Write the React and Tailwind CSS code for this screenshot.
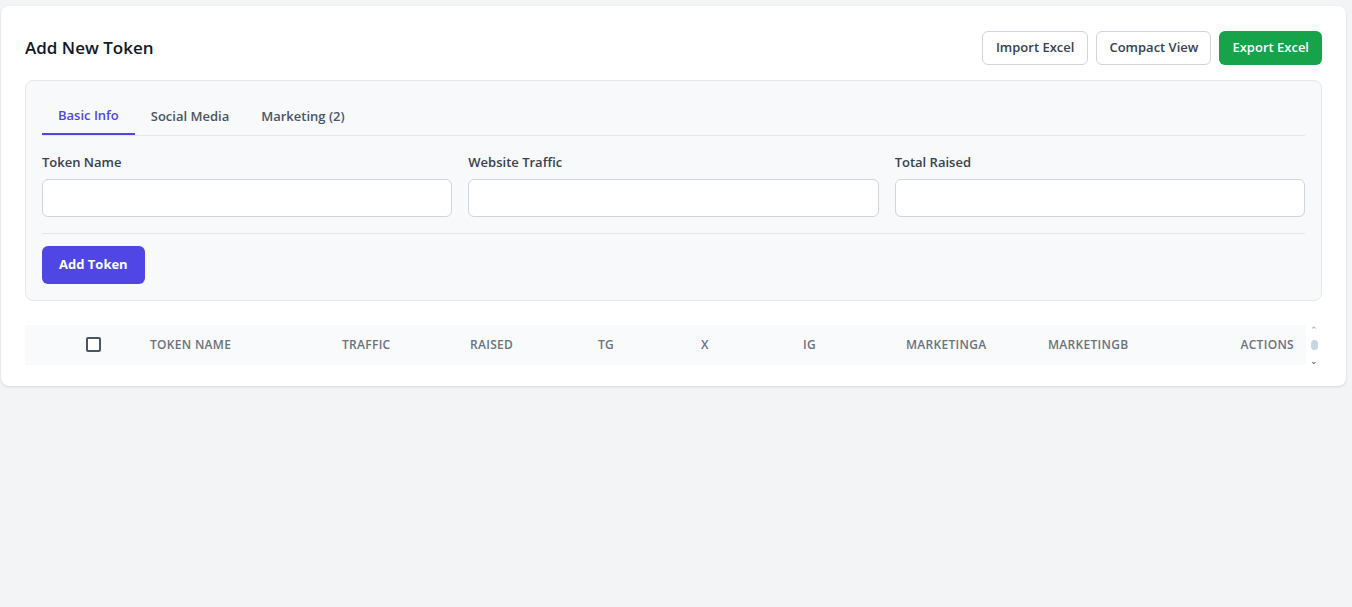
import React from 'react';

const App = () => {
  const font = { fontFamily: '"Open Sans", "Noto Sans", sans-serif' };
  const fields = ['Token Name', 'Website Traffic', 'Total Raised'];
  const cols = [
    ['TOKEN NAME', 'w-[192px]'],
    ['TRAFFIC', 'w-[128px]'],
    ['RAISED', 'w-[128px]'],
    ['TG', 'w-[103px]'],
    ['X', 'w-[102px]'],
    ['IG', 'w-[103px]'],
    ['MARKETINGA', 'w-[142px]'],
    ['MARKETINGB', 'w-[150px]'],
  ];

  return (
    <div className="min-h-[607px] bg-[#f3f4f6] pt-[6px] pl-[1px] pr-[6px]" style={font}>
      <div className="bg-white rounded-lg shadow-sm p-6 h-[380px]">
        <div className="flex items-center justify-between h-[34px] mt-[1px]">
          <h1 className="text-[17px] font-semibold text-[#111827]">Add New Token</h1>
          <div className="flex gap-2">
            <button className="h-[34px] px-[13px] border border-[#d1d5db] rounded-md text-[13px] font-semibold text-[#374151] bg-white">Import Excel</button>
            <button className="h-[34px] px-[12px] border border-[#d1d5db] rounded-md text-[13px] font-semibold text-[#374151] bg-white">Compact View</button>
            <button className="h-[34px] px-[13px] rounded-md text-[13px] font-semibold text-white bg-[#16a34a]">Export Excel</button>
          </div>
        </div>

        <div className="mt-[15px] bg-[#f8f9fb] border border-[#e5e7eb] rounded-lg px-4 pt-4 pb-4">
          <div className="flex border-b border-[#e5e7eb] h-[39px]">
            <div className="px-4 pt-[9px] text-[13px] font-semibold text-[#4f46e5] border-b-2 border-[#4f46e5]">Basic Info</div>
            <div className="px-4 pt-[10px] text-[13px] font-semibold text-[#4b5563]">Social Media</div>
            <div className="px-4 pt-[10px] text-[13px] font-semibold text-[#4b5563]">Marketing (2)</div>
          </div>
          <div className="grid grid-cols-3 gap-4 mt-[17px]">
            {fields.map((f) => (
              <div key={f}>
                <label className="block text-[13px] font-semibold text-[#374151] mb-[6px]">{f}</label>
                <input className="w-full h-[38px] bg-white border border-[#d1d5db] rounded-md" />
              </div>
            ))}
          </div>
          <div className="border-t border-[#e5e7eb] mt-4 pt-3">
            <button className="h-[38px] px-[17px] rounded-md bg-[#4f46e5] text-white text-[13px] font-bold">Add Token</button>
          </div>
        </div>

        <div className="mt-6 flex items-center">
          <div className="flex-1 flex items-center h-[40px] bg-[#f9fafb] text-[12px] font-semibold text-[#6b7280] tracking-wide">
            <div className="w-[125px] flex justify-center pl-[12px]">
              <div className="w-[15px] h-[15px] border-2 border-[#4b5563] rounded-[2px] bg-white"></div>
            </div>
            {cols.map(([c, w]) => (
              <div key={c} className={w}>{c}</div>
            ))}
            <div className="flex-1 text-right pr-3">ACTIONS</div>
          </div>
          <div className="w-[16px] h-[40px] flex flex-col items-center justify-between text-[9px] leading-none text-[#9ca3af]">
            <span>⌃</span>
            <div className="w-[7px] h-[10px] rounded bg-[#cbd5e1]"></div>
            <span className="text-[#4b5563]">⌄</span>
          </div>
        </div>
      </div>
    </div>
  );
};

export default App;
